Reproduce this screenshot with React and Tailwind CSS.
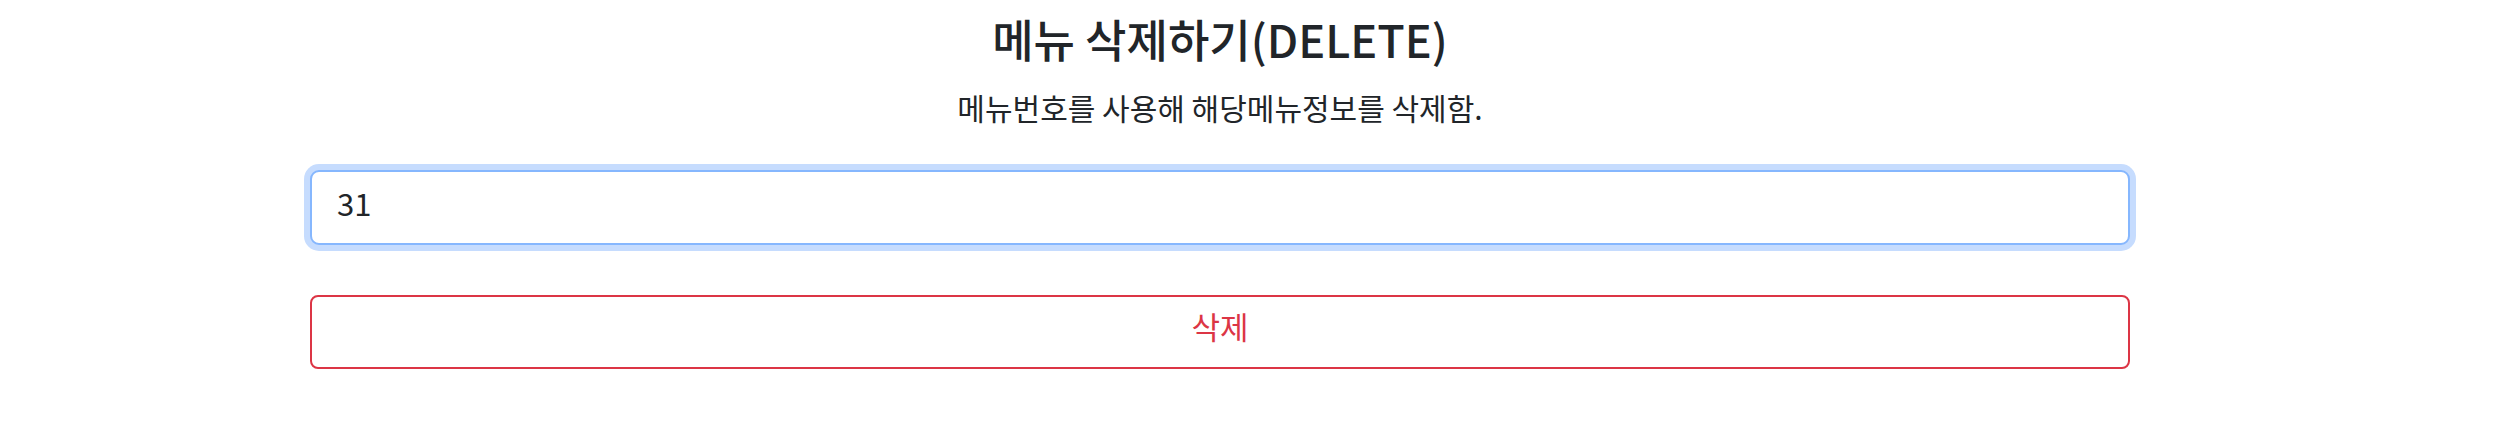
import React, { useState } from 'react';

const font = { fontFamily: '"Noto Sans CJK KR", "Noto Sans", sans-serif' };

const DeleteMenu = () => {
  const [menuNo, setMenuNo] = useState('31');

  return (
    <div className="min-h-screen bg-white text-[#212529]" style={font}>
      <div className="w-[1820px] ml-[310px] pt-[10px]">
        {/* Title */}
        <h2 className="text-center text-[45px] font-medium leading-[57px] mb-[18px]">
          메뉴 삭제하기(DELETE)
        </h2>
        <p className="text-center text-[30px] leading-[45px] mb-[40px]">
          메뉴번호를 사용해 해당메뉴정보를 삭제함.
        </p>

        {/* Form */}
        <input
          type="text"
          value={menuNo}
          onChange={(e) => setMenuNo(e.target.value)}
          className="block w-full h-[75px] px-[25px] pb-[10px] text-[31px] text-[#212529] bg-white border-2 border-[#86b7fe] rounded-[9px] outline-none ring-[6px] ring-[#c6dcfe]"
        />
        <button className="block w-full h-[74px] mt-[50px] pb-[12px] text-[31px] text-[#dc3545] bg-white border-2 border-[#dc3545] rounded-[8px]">
          삭제
        </button>
      </div>
    </div>
  );
};

export default DeleteMenu;
